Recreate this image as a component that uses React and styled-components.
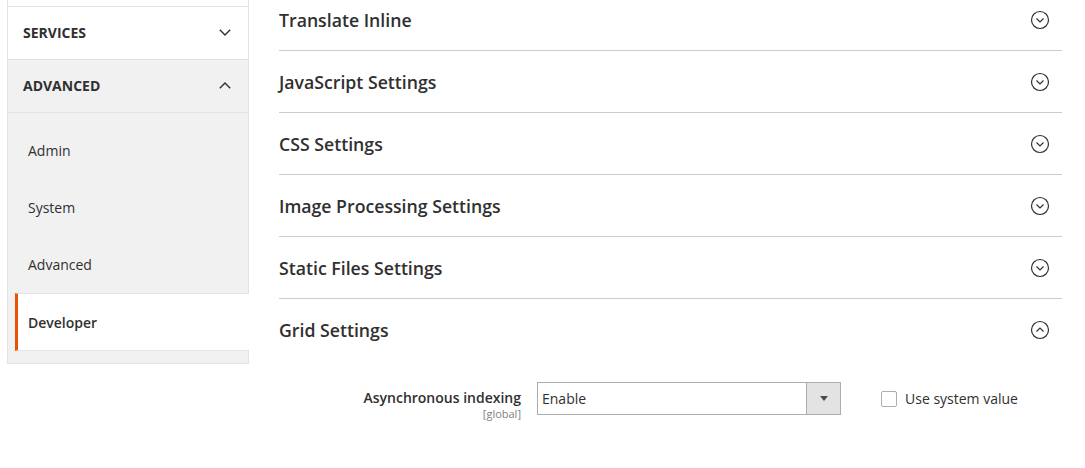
import React from "react";
import styled, { createGlobalStyle } from "styled-components";

const Global = createGlobalStyle`
  html, body { margin: 0; padding: 0; background: #fff; }
  body { font-family: "Open Sans", "Liberation Sans", sans-serif; color: #303030; }
  * { box-sizing: border-box; }
`;

const Page = styled.div`
  display: flex;
  align-items: flex-start;
  padding-left: 7px;
  gap: 30px;
  width: 1085px;
  height: 468px;
  overflow: hidden;
`;

const Nav = styled.div`
  width: 242px;
  flex: none;
  border-left: 1px solid #e3e3e3;
  border-right: 1px solid #e3e3e3;
  border-bottom: 1px solid #e3e3e3;
`;

const NavStub = styled.div`
  height: 7px;
  border-bottom: 1px solid #e3e3e3;
`;

const NavGroup = styled.div`
  height: 53px;
  display: flex;
  align-items: center;
  justify-content: space-between;
  padding: 0 17px 1px 15px;
  border-bottom: 1px solid #e3e3e3;
  background: ${(p) => (p.$open ? "#f1f1f1" : "#fff")};
  font-size: 14px;
  font-weight: 700;
  text-transform: uppercase;
`;

const SubList = styled.div`
  background: #f1f1f1;
  padding: 9px 0 12px 0;
`;

const SubItem = styled.div`
  height: 57px;
  display: flex;
  align-items: center;
  font-size: 14px;
  padding-left: 20px;
  padding-bottom: 1px;
`;

const ActiveItem = styled.div`
  height: 58px;
  display: flex;
  align-items: center;
  font-size: 14px;
  font-weight: 600;
  margin-left: 7px;
  margin-right: -1px;
  padding-left: 10px;
  background: #fff;
  border-left: 3px solid #eb5202;
  border-top: 1px solid #e3e3e3;
  border-bottom: 1px solid #e3e3e3;
`;

const Main = styled.div`
  width: 783px;
  flex: none;
  margin-top: -11px;
`;

const Section = styled.div`
  height: 62px;
  display: flex;
  align-items: center;
  justify-content: space-between;
  padding-right: 12px;
  border-bottom: ${(p) => (p.$last ? "none" : "1px solid #cccccc")};
  font-size: 17.7px;
  font-weight: 600;
  color: #303030;
`;

const Field = styled.div`
  display: grid;
  grid-template-columns: 242px 304px auto;
  column-gap: 16px;
  align-items: start;
  margin-top: 21px;
`;

const LabelCol = styled.div`
  text-align: right;
  padding-top: 6px;
`;

const LabelText = styled.div`
  font-size: 14px;
  font-weight: 600;
  line-height: 19px;
`;

const Scope = styled.div`
  font-size: 11px;
  color: #808080;
  line-height: 13px;
`;

const Select = styled.div`
  height: 33px;
  border: 1px solid #adadad;
  display: flex;
  align-items: stretch;
  font-size: 14px;
`;

const SelectValue = styled.div`
  flex: 1;
  display: flex;
  align-items: center;
  padding-left: 4px;
`;

const SelectButton = styled.div`
  width: 34px;
  background: #e3e3e3;
  border-left: 1px solid #adadad;
  display: flex;
  align-items: center;
  justify-content: center;
`;

const UseDefault = styled.label`
  display: flex;
  align-items: center;
  gap: 8px;
  font-size: 14px;
  margin-left: 24px;
  height: 33px;
`;

const Box = styled.span`
  width: 16px;
  height: 16px;
  border: 1px solid #adadad;
  border-radius: 2px;
  background: #fff;
  display: inline-block;
`;

const Chevron = ({ up }) => (
  <svg width="12" height="7" viewBox="0 0 12 7">
    <path
      d={up ? "M0.8 6.2 L6 1 L11.2 6.2" : "M0.8 0.8 L6 6 L11.2 0.8"}
      fill="none"
      stroke="#303030"
      strokeWidth="1.4"
    />
  </svg>
);

const CircleIcon = ({ up }) => (
  <svg width="20" height="20" viewBox="0 0 20 20">
    <circle cx="10" cy="10" r="8.5" fill="none" stroke="#303030" strokeWidth="1.2" />
    <path
      d={up ? "M6.5 11.5 L10 8 L13.5 11.5" : "M6.5 8.5 L10 12 L13.5 8.5"}
      fill="none"
      stroke="#303030"
      strokeWidth="1.2"
    />
  </svg>
);

const sections = [
  "Translate Inline",
  "JavaScript Settings",
  "CSS Settings",
  "Image Processing Settings",
  "Static Files Settings",
];

export default function App() {
  return (
    <>
      <Global />
      <Page>
        <Nav>
          <NavStub />
          <NavGroup>
            <span>Services</span>
            <Chevron />
          </NavGroup>
          <NavGroup $open>
            <span>Advanced</span>
            <Chevron up />
          </NavGroup>
          <SubList>
            <SubItem>Admin</SubItem>
            <SubItem>System</SubItem>
            <SubItem>Advanced</SubItem>
            <ActiveItem>Developer</ActiveItem>
          </SubList>
        </Nav>
        <Main>
          {sections.map((s) => (
            <Section key={s}>
              <span>{s}</span>
              <CircleIcon />
            </Section>
          ))}
          <Section $last>
            <span>Grid Settings</span>
            <CircleIcon up />
          </Section>
          <Field>
            <LabelCol>
              <LabelText>Asynchronous indexing</LabelText>
              <Scope>[global]</Scope>
            </LabelCol>
            <Select>
              <SelectValue>Enable</SelectValue>
              <SelectButton>
                <svg width="8" height="5" viewBox="0 0 8 5">
                  <path d="M0 0 H8 L4 5 Z" fill="#514943" />
                </svg>
              </SelectButton>
            </Select>
            <UseDefault>
              <Box />
              <span>Use system value</span>
            </UseDefault>
          </Field>
        </Main>
      </Page>
    </>
  );
}
